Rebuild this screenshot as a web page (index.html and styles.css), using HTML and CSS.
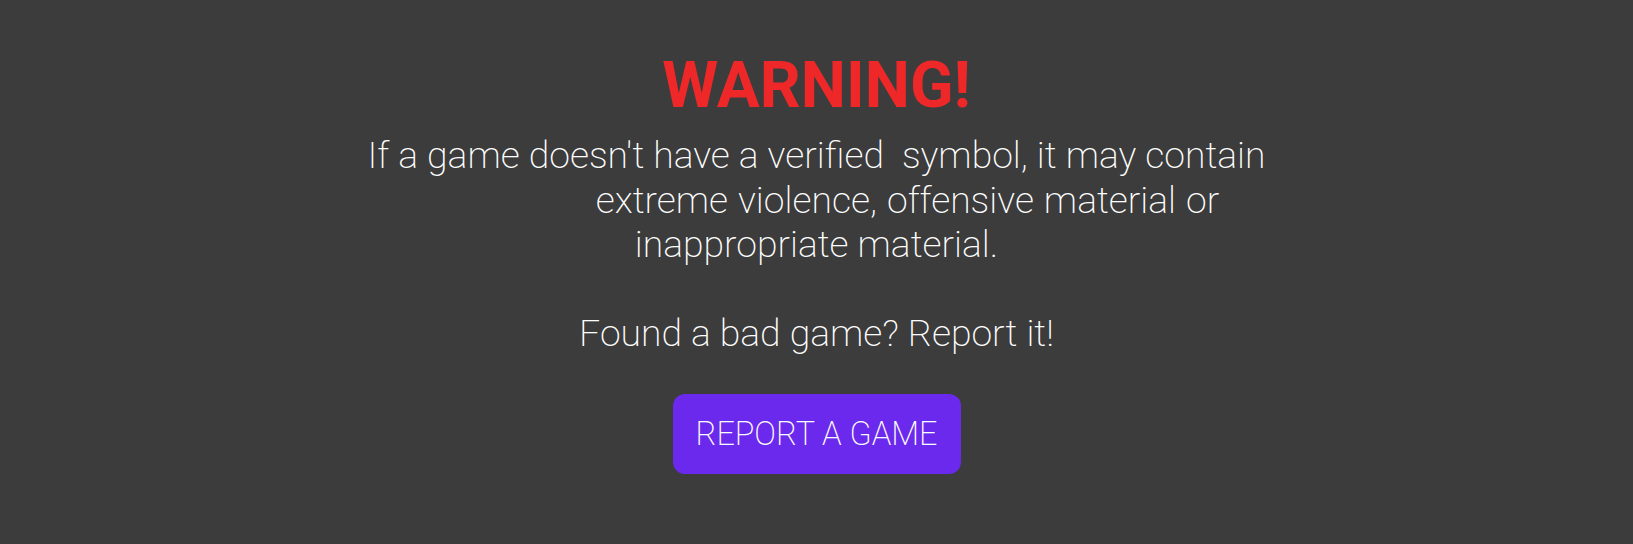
FILE: index.html
```html
<!DOCTYPE html>
<html lang="en">
<head>
<meta charset="utf-8">
<title>Warning</title>
<link rel="stylesheet" href="styles.css">
</head>
<body>
<main class="warning">
  <h1 class="warning__title">WARNING!</h1>
  <p class="warning__text">
    <span class="warning__line">If a game doesn't have a verified&nbsp; symbol, it may contain</span>
    <span class="warning__line warning__line--shifted">extreme violence, offensive material or</span>
    <span class="warning__line">inappropriate material.</span>
    <span class="warning__line warning__line--blank">&nbsp;</span>
    <span class="warning__line">Found a bad game? Report it!</span>
  </p>
  <button class="warning__button" type="button">REPORT A GAME</button>
</main>
</body>
</html>
```

FILE: styles.css
```css
html, body {
  margin: 0;
  padding: 0;
}

body {
  background: #3c3c3c;
  font-family: Roboto, "Liberation Sans", sans-serif;
  color: #ffffff;
  width: 1633px;
  height: 544px;
}

.warning {
  display: flex;
  flex-direction: column;
  align-items: center;
  padding-top: 48px;
}

.warning__title {
  margin: 0;
  font-size: 64px;
  font-weight: 700;
  line-height: 75px;
  color: #ee2828;
}

.warning__text {
  margin: 10px 0 0;
  font-size: 37.3px;
  font-weight: 200;
  line-height: 44.5px;
  text-align: center;
}

.warning__line {
  display: block;
}

.warning__line--shifted {
  padding-left: 182px;
  word-spacing: 1px;
}

.warning__button {
  margin-top: 38px;
  padding: 21px 23px;
  border: none;
  border-radius: 12px;
  background: #6c29ee;
  color: #ffffff;
  font-family: Roboto, "Liberation Sans", sans-serif;
  font-size: 32.3px;
  font-weight: 200;
  line-height: 38px;
}
```
